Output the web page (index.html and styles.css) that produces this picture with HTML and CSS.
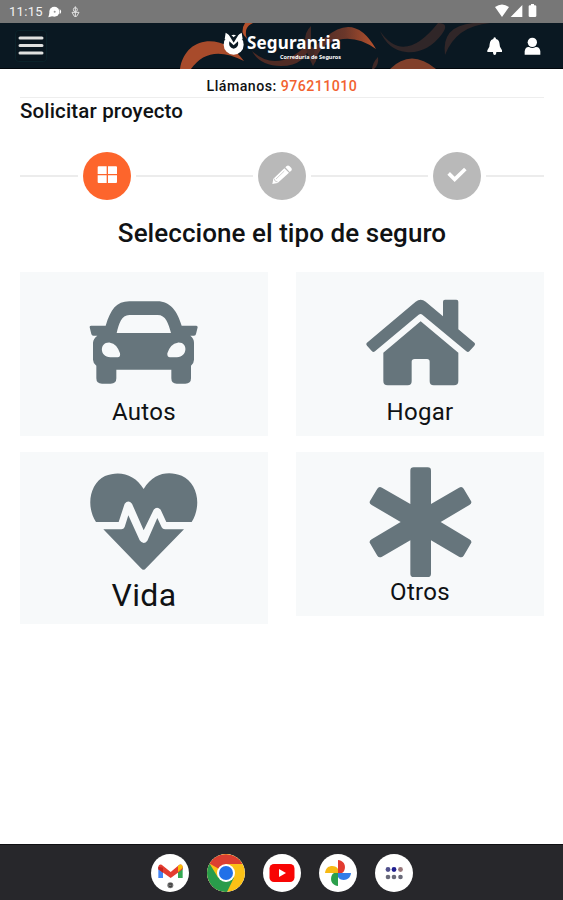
FILE: index.html
```html
<!DOCTYPE html>
<html lang="es">
<head>
<meta charset="utf-8">
<title>Segurantia</title>
<link rel="stylesheet" href="styles.css">
</head>
<body>
<div class="status">
  <span class="time">11:15</span>
  <svg class="status-left" width="40" height="23" viewBox="135 0 120 69"><circle cx="163" cy="35" r="15" fill="#fff"/><path d="M145 52l4-15 13 10zM179 27q9 8 0 16" fill="#fff"/><circle cx="164" cy="35" r="3" fill="#999"/><g fill="none" stroke="#e2e2e2" stroke-width="3"><path d="M226 19v32M216 37h21l-7 12h-7z"/><circle cx="226" cy="29" r="6"/></g></svg>
  <svg class="status-right" width="50" height="23" viewBox="400 0 150 69"><path d="M406 21q21-15 42 0l-21 30zM488 15v36h-35zM507 19q0-3 4-3h3v-4h9v4h3q4 0 4 3v29q0 3-4 3h-15q-4 0-4-3z" fill="#fff"/></svg>
</div>
<header class="header">
  <svg class="pattern" width="330" height="46" viewBox="170 23 330 46">
    <defs><linearGradient id="arc"><stop offset="0" stop-color="#4c2b27"/><stop offset=".5" stop-color="#6b372a"/><stop offset="1" stop-color="#b8522d"/></linearGradient></defs>
    <path d="M180 69C185 35 224 32 244 61Q209 43 191 69z" fill="#a84b2b"/>
    <path d="M253 23Q243 27 247 39Q239 32 245 23z" fill="#b4502c"/>
    <path d="M252 51Q278 75 310 42Q307 66 281 66Q260 66 252 51z" fill="#502b24"/>
    <path d="M311 26Q298 38 313 66Q322 52 311 46z" fill="#412825"/>
    <path d="M326 37Q355 12 376 49Q359 37 343 39Q319 42 315 63Q310 46 326 37z" fill="url(#arc)"/>
    <path d="M380 31Q404 66 438 23Q450 23 442 34Q427 54 406 52Q388 50 380 31z" fill="#302628"/>
    <path d="M445 55Q441 26 473 23h17Q456 26 445 55z" fill="#302628"/>
    <path d="M390 69Q411 48 436 69z" fill="#81402b"/>
    <path d="M374 69q5-4 4-12q-5 5-6 12z" fill="#402927"/>
  </svg>
  <svg class="menu" width="32" height="32" viewBox="0 0 32 32"><rect x=".5" y=".5" width="31" height="31" rx="3" fill="#09161f" stroke="#0b222a"/><path d="M5 8h22M5 15.5h22M5 23h22" stroke="#e0e0df" stroke-width="3" stroke-linecap="round"/></svg>
  <div class="brand">
    <svg width="22" height="24" viewBox="160 48 66 72"><circle cx="192" cy="86" r="30" fill="#fff"/><path d="M168 50l14 9h20l14-9 3 20H165z" fill="#fff"/><path d="M176 54l16 26 16-26-8 2-8 8-8-8zM179 76q-4 20 13 22 17-2 13-22l-13 12z" fill="#0a1822"/></svg>
    <div class="brand-text"><strong>Segurantia</strong><small>Correduría de Seguros</small></div>
  </div>
  <svg class="actions" width="60" height="28" viewBox="375 102 180 84"><path d="M404 112q4 0 4 5c11 3 10 12 12 23l6 11v5h-17q0 9-5 9t-5-9h-17v-5l6-11c2-11 1-20 12-23q0-5 4-5z" fill="#fff"/><circle cx="517" cy="127" r="14" fill="#fff"/><path d="M494 164v-10q2-14 13-13 10 6 20 0 12-1 14 13v10z" fill="#fff"/></svg>
</header>
<main>
  <div class="call">Llámanos: <a>976211010</a></div>
  <h1>Solicitar proyecto</h1>
  <div class="steps">
    <span class="step active"><svg width="48" height="48" viewBox="248 34 144 144"><path d="M295 77h24v23h-27V80q0-3 3-3zM323 77h24q3 0 3 3v20h-27zM292 104h27v23h-24q-3 0-3-3zM323 104h27v20q0 3-3 3h-24z" fill="#fff"/></svg></span>
    <span class="step"><svg width="48" height="48" viewBox="775 34 144 144"><path d="M818 130l3-16 33-31 14 13-34 31zM857 80l4-4q4-3 8 0l6 6q3 4 0 8l-5 4z" fill="#fff"/><path d="M829 115l25-24M824 114l2 7 8 3" fill="none" stroke="#b9b9b9" stroke-width="2"/></svg></span>
    <span class="step"><svg width="48" height="48" viewBox="580 34 144 144"><path d="M627 98l18 18 32-31" fill="none" stroke="#fff" stroke-width="11"/></svg></span>
  </div>
  <h2>Seleccione el tipo de seguro</h2>
  <div class="grid">
    <div class="card">
      <svg width="248" height="120" viewBox="30 21 744 360"><path fill="#66757c" fill-rule="evenodd" d="M243 182H287C302 133 319 109 358 109H442C481 109 502 139 515 182H559Q563 182 563 187L558 207Q557 212 552 212H541Q552 221 552 233V284Q552 294 543 302V340Q543 356 526 356H500Q484 356 484 340V314H319V340Q319 356 302 356H276Q259 356 259 340V302Q249 294 249 284V233Q250 221 262 212H250Q245 212 244 207L239 187Q238 182 243 182zM320 204H483C475 174 467 150 443 150H358C334 150 327 176 320 204zM300 233C268 230 267 276 301 277H323Q332 277 330 265Q321 236 300 233zM503 233C535 230 534 276 501 277H480Q471 277 472 265Q481 236 503 233z"/></svg>
      <p>Autos</p>
    </div>
    <div class="card">
      <svg width="248" height="120" viewBox="33 21 744 360"><path fill="#66757c" d="M245 234L392 110Q407 99 422 110L474 154V110Q474 104 480 104H514Q520 104 520 110V193L569 234Q572 238 568 242L553 259Q549 263 544 259L412 149Q407 145 401 149L270 259Q265 263 261 259L246 242Q242 238 245 234zM407 169L520 263V348Q520 361 507 361H446Q434 361 434 349V290Q434 282 426 282H389Q380 282 380 290V349Q380 361 368 361H308Q295 361 295 348V263z"/></svg>
      <p>Hogar</p>
    </div>
    <div class="card vida">
      <svg width="248" height="120" viewBox="30 21 744 360"><path fill="#66757c" d="M401 132C431 82 477 77 515 92C563 113 576 182 545 231H469L452 194Q441 183 431 194L401 256L366 176Q355 163 344 176L326 231H258C227 183 239 116 285 93C329 75 375 88 401 132zM280 253H334Q341 253 344 246L355 211L389 286Q401 302 412 287L442 219L455 247Q458 253 465 253H522L408 370Q401 379 393 370z"/></svg>
      <p>Vida</p>
    </div>
    <div class="card otros">
      <svg width="248" height="128" viewBox="33 21 744 384"><path fill="#66757c" d="M386 67H428Q438 67 438 77V177L522 128Q531 123 536 131L558 168Q562 175 553 180L467 231L553 283Q562 288 558 295L536 332Q531 340 522 335L438 286V386Q438 396 428 396H386Q376 396 376 386V286L291 335Q282 340 277 332L255 295Q251 288 260 283L347 231L260 180Q251 175 255 168L277 131Q282 123 291 128L376 177V77Q376 67 386 67z"/></svg>
      <p>Otros</p>
    </div>
  </div>
</main>
<footer class="dock">
  <span class="app"><svg width="38" height="38" viewBox="30 54 114 114"><path d="M52 94v32h14v-31z" fill="#4385f5"/><path d="M111 94v32h14V94z" fill="#34a853"/><path d="M52 100v-8q1-8 10-6l27 22 26-22q9-2 10 6v8l-36 26z" fill="#e43d30"/><path d="M111 90q13-11 14 5l-14 13z" fill="#fbbc04"/><path d="M52 100v-8l14 3v15z" fill="#c5221f"/><circle cx="88" cy="148" r="9" fill="#777"/><path d="M83 144h11M84 149l4 4 5-4" stroke="#222" stroke-width="3" fill="none"/></svg></span>
  <span class="app"><svg width="38" height="38" viewBox="0 0 38 38"><circle cx="19" cy="19" r="19" fill="#fbc116"/><path d="M19 19L2.5 9.5A19 19 0 0 1 35.5 10H19z" fill="#dc3f31"/><path d="M2.5 9.5A19 19 0 0 0 20 38L27 23.5 11 23.5z" fill="#299c4b"/><circle cx="19" cy="19" r="9" fill="#fff"/><circle cx="19" cy="19" r="7" fill="#2170e8"/></svg></span>
  <span class="app"><svg width="38" height="38" viewBox="0 0 38 38"><rect x="6.5" y="10" width="25" height="18" rx="4.5" fill="#f80504"/><path d="M16 15l7 4-7 4z" fill="#fff"/></svg></span>
  <span class="app"><svg width="38" height="38" viewBox="0 0 38 38"><path d="M19 19V6c9 1 8 11 4 13z" fill="#e23b30"/><path d="M19 19h13c-1 9-11 8-13 4z" fill="#327de8"/><path d="M19 19v13c-9-1-8-11-4-13z" fill="#2ca04c"/><path d="M19 19H6c1-9 11-8 13-4z" fill="#f7b914"/></svg></span>
  <span class="app"><svg width="38" height="38" viewBox="0 0 38 38"><circle cx="13" cy="15.5" r="2.4" fill="#50508c"/><circle cx="19" cy="15.5" r="2.4" fill="#202090"/><circle cx="25.5" cy="15.5" r="2.4" fill="#98777b"/><g fill="#696a79"><circle cx="13" cy="23" r="2.3"/><circle cx="19" cy="23" r="2.3"/><circle cx="25.5" cy="23" r="2.3"/></g></svg></span>
</footer>
</body>
</html>
```
FILE: styles.css
```css
* { box-sizing: border-box; }
body { margin: 0; width: 563px; height: 900px; display: flex; flex-direction: column; font-family: Roboto, sans-serif; color: #101214; background: #fff; overflow: hidden; }
svg { display: block; flex: none; }
h1, h2, p { margin: 0; }
.status { height: 23px; flex: none; display: flex; align-items: center; background: #777; color: #f2f2f2; padding: 0 15px 0 9px; }
.time { width: 36px; font-size: 13px; line-height: 24px; letter-spacing: .3px; white-space: nowrap; }
.status-right { margin-left: auto; margin-right: 5px; }
.header { position: relative; height: 46px; flex: none; display: flex; align-items: center; background: #0a1822; border-bottom: 1px solid #02070c; padding: 0 18px 0 15px; }
.pattern { position: absolute; left: 170px; top: 0; }
.brand { position: relative; display: flex; margin-left: 176px; color: #fff; }
.brand svg { margin-top: 1px; }
.brand-text { width: 97px; display: flex; flex-direction: column; align-items: flex-end; }
.brand strong { font: bold 17px/24px "Noto Sans", sans-serif; letter-spacing: .15px; margin-right: 1px; }
.brand small { font: bold 5.5px/7px "Noto Sans", sans-serif; margin: -1px 1px 0 0; white-space: nowrap; }
.actions { position: relative; margin-left: auto; margin-top: 4px; }
main { flex: 1; padding: 0 19px 0 20px; }
.call { height: 29px; border-bottom: 1px solid #eee; text-align: center; font-size: 14.2px; line-height: 34px; font-weight: 500; letter-spacing: .46px; }
.call a { color: #f2622f; }
h1 { font-size: 20.5px; font-weight: 500; line-height: 26px; letter-spacing: .15px; }
.steps { height: 48px; margin-top: 27.5px; display: flex; justify-content: space-around; background: linear-gradient(#ececec, #ececec) 0 23px / 100% 2px no-repeat; }
.step { width: 58px; height: 48px; display: flex; justify-content: center; background: #fff; }
.step svg { border-radius: 50%; background: #b9b9b9; }
.active svg { background: #fd652c; }
h2 { margin-top: 17.5px; font-size: 26px; font-weight: 500; line-height: 32px; letter-spacing: .05px; text-align: center; white-space: nowrap; }
.grid { margin-top: 23px; display: grid; grid-template-columns: 248px 248px; column-gap: 28px; row-gap: 16px; align-items: start; }
.card { height: 164px; background: #f7f9fa; text-align: center; }
.card p { font-size: 24px; line-height: 41px; letter-spacing: .3px; }
.card.vida { height: 172px; }
.card.vida p { font-size: 32px; line-height: 47px; }
.card.otros p { line-height: 24px; }
.dock { height: 56px; flex: none; display: flex; justify-content: center; align-items: center; gap: 18px; background: #27272b; border-top: 1px solid #101013; }
.app { width: 38px; height: 38px; border-radius: 50%; background: #fff; overflow: hidden; }
```
